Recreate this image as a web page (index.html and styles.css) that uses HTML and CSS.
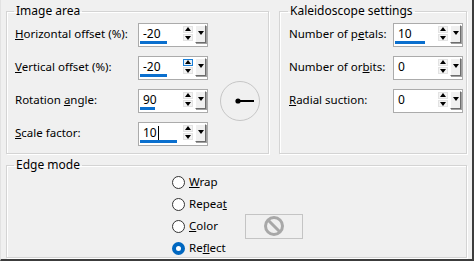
FILE: index.html
```html
<!DOCTYPE html>
<html lang="en">

<head>
    <meta charset="UTF-8">
    <title>Kaleidoscope</title>
    <link rel="stylesheet" href="styles.css">
</head>

<body>
    <div class="dialog">
        <div class="top">
            <fieldset class="group image-area">
                <legend>Image area</legend>
                <div class="form-grid">
                    <label><u>H</u>orizontal offset (%):</label>
                    <div class="spin">
                        <span class="val">-20</span>
                        <span class="bar" style="width: 27px"></span>
                        <span class="arrows"><i class="up"></i><i class="down"></i></span>
                        <span class="drop"></span>
                    </div>

                    <label><u>V</u>ertical offset (%):</label>
                    <div class="spin">
                        <span class="val">-20</span>
                        <span class="bar" style="width: 27px"></span>
                        <span class="arrows"><i class="up hot"></i><i class="down"></i></span>
                        <span class="drop"></span>
                    </div>

                    <label>Rotation <u>a</u>ngle:</label>
                    <div class="spin">
                        <span class="val">90</span>
                        <span class="bar" style="width: 15px"></span>
                        <span class="arrows"><i class="up"></i><i class="down"></i></span>
                        <span class="drop"></span>
                    </div>

                    <label><u>S</u>cale factor:</label>
                    <div class="spin">
                        <span class="val">10<span class="caret"></span></span>
                        <span class="bar" style="width: 37px"></span>
                        <span class="arrows"><i class="up"></i><i class="down"></i></span>
                        <span class="drop"></span>
                    </div>

                    <div class="dial">
                        <svg width="42" height="42" viewBox="0 0 42 42">
                            <circle cx="21" cy="21" r="19.5" fill="#f0f0f0" stroke="#c6c6c6" />
                            <line x1="19" y1="21" x2="35" y2="21" stroke="#000" stroke-width="2" />
                            <circle cx="19" cy="21" r="2.6" fill="#000" />
                        </svg>
                    </div>
                </div>
            </fieldset>

            <fieldset class="group kaleido">
                <legend>Kaleidoscope settings</legend>
                <div class="form-grid">
                    <label>Number of p<u>e</u>tals:</label>
                    <div class="spin">
                        <span class="val">10</span>
                        <span class="bar" style="width: 30px"></span>
                        <span class="arrows"><i class="up"></i><i class="down"></i></span>
                        <span class="drop"></span>
                    </div>

                    <label>Number of or<u>b</u>its:</label>
                    <div class="spin">
                        <span class="val">0</span>
                        <span class="arrows"><i class="up"></i><i class="down"></i></span>
                        <span class="drop"></span>
                    </div>

                    <label><u>R</u>adial suction:</label>
                    <div class="spin">
                        <span class="val">0</span>
                        <span class="arrows"><i class="up"></i><i class="down"></i></span>
                        <span class="drop"></span>
                    </div>
                </div>
            </fieldset>
        </div>

        <fieldset class="group edge">
            <legend>Edge mode</legend>
            <div class="radio-grid">
                <label class="radio"><span class="dot"></span><span><u>W</u>rap</span></label>
                <label class="radio"><span class="dot"></span><span>Repea<u>t</u></span></label>
                <label class="radio"><span class="dot"></span><span><u>C</u>olor</span></label>
                <div class="swatch">
                    <svg width="22" height="22" viewBox="0 0 22 22">
                        <circle cx="11" cy="11" r="8.5" fill="none" stroke="#a8a8a8" stroke-width="3" />
                        <line x1="5" y1="5" x2="17" y2="17" stroke="#a8a8a8" stroke-width="3" />
                    </svg>
                </div>
                <label class="radio"><span class="dot checked"></span><span>Re<u>f</u>lect</span></label>
            </div>
        </fieldset>
    </div>
</body>

</html>
```

FILE: styles.css
```css
body {
    margin: 0;
    background-color: #f0f0f0;
    font-family: "Noto Sans", "Open Sans", sans-serif;
    font-size: 11px;
    color: #000;
}

.dialog {
    width: 474px;
    height: 261px;
    box-sizing: border-box;
    padding: 0 0 0 5px;
    border-left: 1px solid #e2e2e2;
    border-right: 2px solid #3c3c3c;
    border-bottom: 2px solid #3c3c3c;
    overflow: hidden;
}

.top {
    display: flex;
    gap: 10px;
}

.group {
    margin: 3px 0 0 0;
    padding: 4px 8px 7px 8px;
    border: 1px solid #d4d4d4;
    box-shadow: inset 1px 1px 0 #fff, 1px 1px 0 #fff;
    box-sizing: border-box;
    min-width: 0;
}

.group legend {
    padding: 0 2px;
    margin-left: -1px;
    line-height: 16px;
    font-size: 12px;
}

.image-area {
    width: 263px;
}

.kaleido {
    width: 188px;
    padding-left: 9px;
}

.form-grid {
    display: grid;
    grid-template-columns: 123px 70px auto;
    grid-auto-rows: 24px;
    row-gap: 9px;
    align-items: center;
}

.kaleido .form-grid {
    grid-template-columns: 104px 70px;
}

.form-grid label {
    grid-column: 1;
    line-height: 16px;
    margin-top: -3px;
    font-size: 11.5px;
}

.spin {
    grid-column: 2;
    position: relative;
    display: flex;
    align-items: center;
    height: 24px;
    box-sizing: border-box;
    border: 1px solid #ababab;
    background-color: #fff;
}

.spin .val {
    flex: 1;
    padding-left: 4px;
    line-height: 16px;
    margin-top: -3px;
    font-size: 12px;
}

.caret {
    display: inline-block;
    width: 1px;
    height: 14px;
    margin-left: 1px;
    vertical-align: -3px;
    background-color: #000;
}

.spin .bar {
    position: absolute;
    left: 1px;
    bottom: 2px;
    height: 3px;
    background-color: #0a6fce;
}

.arrows {
    display: flex;
    flex-direction: column;
    gap: 1px;
    width: 10px;
    margin-top: -3px;
    margin-right: 2px;
}

.arrows i {
    position: relative;
    display: block;
    height: 7px;
    box-sizing: border-box;
    border: 1px solid #e3e3e3;
    background-color: #f3f3f3;
}

.arrows i::after {
    content: "";
    position: absolute;
    left: 1px;
    width: 0;
    height: 0;
    border-left: 3px solid transparent;
    border-right: 3px solid transparent;
}

.arrows .up::after {
    top: 0;
    border-bottom: 4px solid #000;
}

.arrows .down::after {
    top: 1px;
    border-top: 4px solid #000;
}

.arrows .hot {
    border-color: #1a7fd8;
    background-color: #e5f1fb;
}

.drop {
    position: relative;
    width: 11px;
    height: 18px;
    margin: -3px 1px 0 0;
    box-sizing: border-box;
    background-color: #f0f0f0;
    border-top: 1px solid #fff;
    border-left: 1px solid #fff;
    border-right: 1px solid #6d6d6d;
    border-bottom: 1px solid #6d6d6d;
    box-shadow: 1px 1px 0 #a0a0a0;
}

.drop::after {
    content: "";
    position: absolute;
    left: 2px;
    top: 5px;
    border-left: 3px solid transparent;
    border-right: 3px solid transparent;
    border-top: 4px solid #000;
}

.dial {
    grid-column: 3;
    grid-row: 2 / 5;
    align-self: center;
    margin-left: 11px;
    height: 42px;
}

.dial svg {
    display: block;
}

.edge {
    width: 461px;
    height: 101px;
    margin-top: 3px;
    padding-top: 0;
}

.radio-grid {
    display: grid;
    grid-template-columns: 73px 58px;
    grid-auto-rows: 22px;
    align-items: center;
    margin: -2px 0 0 157px;
}

.radio {
    grid-column: 1;
    display: flex;
    align-items: center;
    gap: 4px;
    line-height: 16px;
    font-size: 11.5px;
}

.dot {
    flex: none;
    width: 13px;
    height: 13px;
    box-sizing: border-box;
    border: 1px solid #333;
    border-radius: 50%;
    background-color: #fff;
}

.dot.checked {
    border: 4px solid #0067c0;
}

.swatch {
    grid-column: 2;
    grid-row: 3;
    height: 25px;
    margin: -2px 0;
    box-sizing: border-box;
    border: 1px solid #c4c4c4;
    display: flex;
    align-items: center;
    justify-content: center;
}

.swatch svg {
    display: block;
}
```
